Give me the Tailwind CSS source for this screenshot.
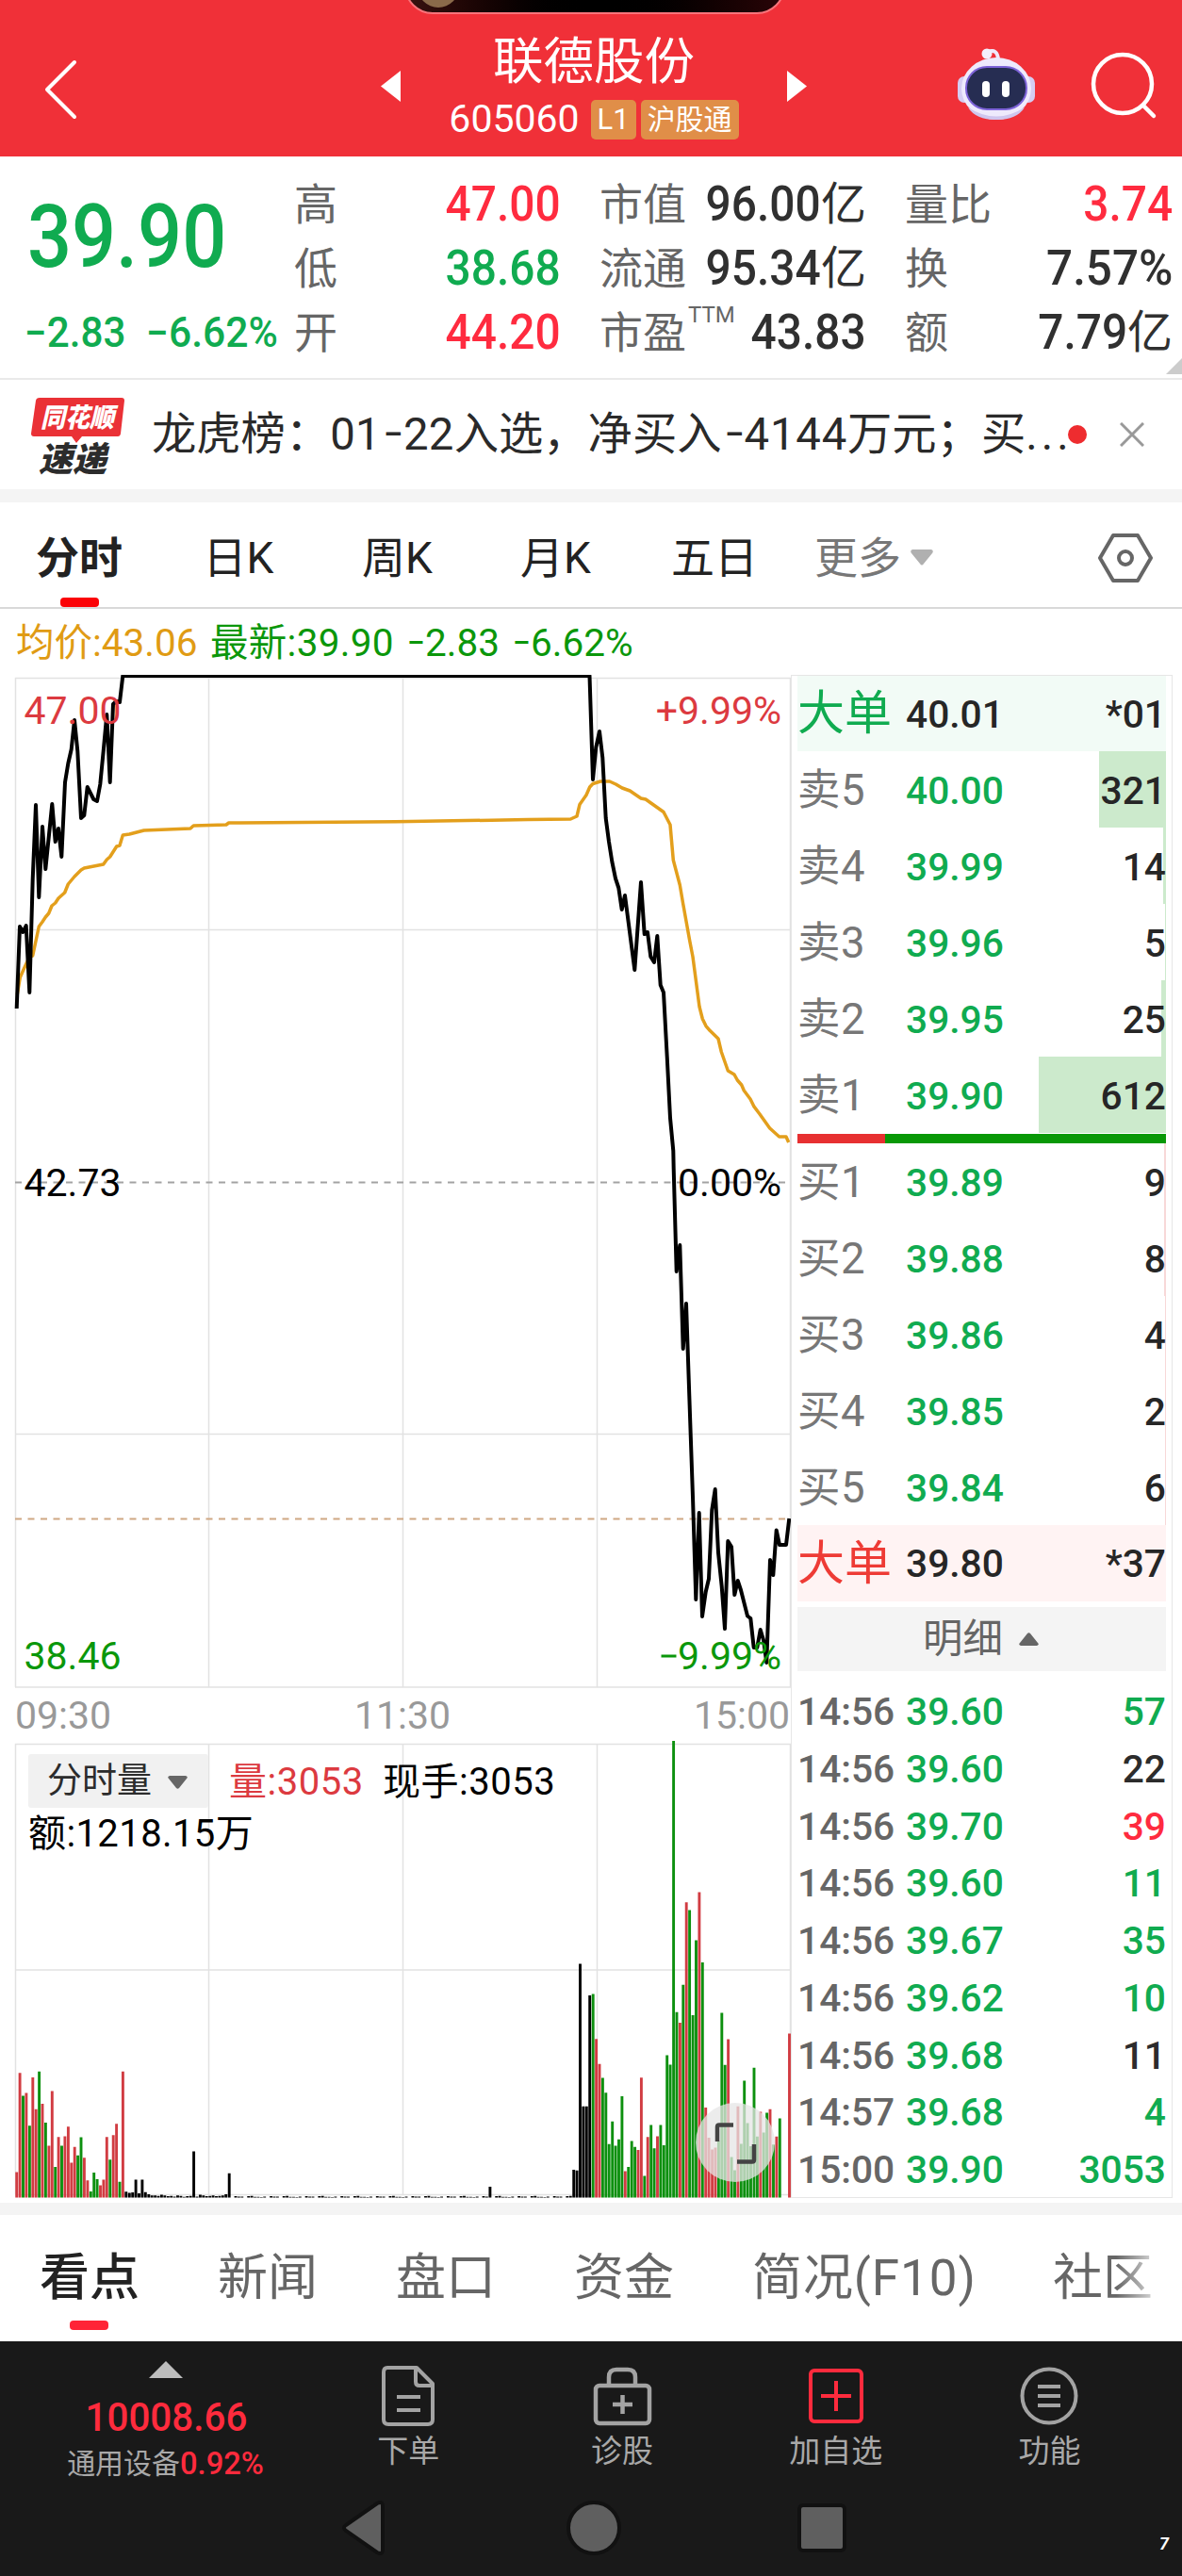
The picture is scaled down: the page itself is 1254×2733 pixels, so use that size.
<!DOCTYPE html>
<html lang="zh-CN">
  <head>
    <meta charset="UTF-8" />
    <meta name="viewport" content="width=device-width, initial-scale=1.0" />
    <title>联德股份 605060</title>
    <script src="https://cdn.jsdelivr.net/npm/@tailwindcss/browser@4"></script>
  </head>

  <body class="w-[1254px] bg-white font-[Roboto,'Noto_Sans_CJK_SC',sans-serif] text-[#222] leading-none whitespace-nowrap">
    <!-- header -->
    <header class="relative flex h-[166px] items-center overflow-hidden bg-[#f03038] text-white">
      <div class="absolute -top-12 left-[429px] h-[63px] w-[404px] overflow-hidden rounded-[30px] border-2 border-[#f8737a] bg-linear-to-r from-[#3a1210] via-black to-[#2a0508]">
        <div class="absolute bottom-[5px] left-3 size-[44px] rounded-full bg-[#8a6a4a]"></div>
      </div>
      <svg class="ml-[44px] mt-[24px] h-[64px] w-[40px]" viewBox="0 0 40 64" fill="none" stroke="#fff" stroke-width="4" stroke-linecap="round" stroke-linejoin="round"><path d="M35 3 6 32l29 29" /></svg>
      <svg class="ml-[320px] mt-[17px] h-[33px] w-[21px]" viewBox="0 0 21 33" fill="#fff"><path d="M21 0v33L0 16.500z" /></svg>
      <div class="mt-[23px] flex w-[410px] flex-col items-center">
        <h1 class="h-[64px] text-[53.500px] leading-[64px]">联德股份</h1>
        <div class="flex h-[58px] items-center">
          <span class="mr-[12px] text-[41px]">605060</span>
          <span class="mr-[5px] h-[42px] w-[48px] rounded-[5px] bg-[#e08e48] text-center text-[31px] leading-[42px]">L1</span>
          <span class="h-[42px] w-[104px] rounded-[5px] bg-[#e08e48] text-center text-[30px] leading-[41px]">沪股通</span>
        </div>
      </div>
      <svg class="mt-[17px] h-[33px] w-[21px]" viewBox="0 0 21 33" fill="#fff"><path d="M0 0v33l21-16.500z" /></svg>
      <svg class="ml-[159px] mt-[12px] h-[80px] w-[84px]" viewBox="0 0 84 80">
        <path d="M33 6q10-4 11 8" fill="none" stroke="#efe9fb" stroke-width="4" />
        <circle cx="32" cy="8" r="5.500" fill="#f4effc" />
        <rect x="1" y="32" width="14" height="28" rx="7" fill="#d5ccf2" />
        <rect x="69" y="32" width="14" height="28" rx="7" fill="#d5ccf2" />
        <ellipse cx="42" cy="45" rx="37" ry="33" fill="#eeeafc" />
        <path d="M12 65q30 19 60 0-8 13-30 13T12 65z" fill="#cfc6ee" />
        <rect x="10" y="22" width="64" height="45" rx="22" fill="#262d52" stroke="#7d63d8" stroke-width="2" />
        <rect x="27" y="37" width="8" height="17" rx="4" fill="#fff" />
        <rect x="48" y="37" width="8" height="17" rx="4" fill="#fff" />
      </svg>
      <svg class="ml-[58px] mt-[16px] h-[72px] w-[72px]" viewBox="0 0 72 72" fill="none" stroke="#fff" stroke-width="4.500" stroke-linecap="round"><circle cx="34" cy="34" r="31" /><path d="m56 57 11 11" /></svg>
    </header>

    <!-- quote -->
    <section class="relative flex h-[237px] border-b-2 border-[#e9e9e9] pt-[17px] text-[46px] text-[#666]">
      <div class="w-[312px] font-medium text-[#10ab50]">
        <div class="h-[136px] pl-[29px] text-[92px] leading-[138px]"><span class="inline-block origin-left scale-x-[.9]">39.90</span></div>
        <div class="flex h-[68px] items-center pl-[26px] pt-px text-[43.500px] leading-[68px]"><span class="w-[129px]"><span class="inline-block origin-left scale-x-[.97]">−2.83</span></span><span class="inline-block origin-left scale-x-[.98]">−6.62%</span></div>
      </div>
      <div class="w-[283px] leading-[68px]">
        <div class="flex justify-between"><span>高</span><b class="origin-right scale-x-[.92] text-[52px] font-medium text-[#ff2b3f]">47.00</b></div>
        <div class="flex justify-between"><span>低</span><b class="origin-right scale-x-[.92] text-[52px] font-medium text-[#10ab50]">38.68</b></div>
        <div class="flex justify-between"><span>开</span><b class="origin-right scale-x-[.92] text-[52px] font-medium text-[#ff2b3f]">44.20</b></div>
      </div>
      <div class="ml-[41px] w-[283px] leading-[68px]">
        <div class="flex justify-between"><span>市值</span><span class="flex text-[#303030]"><b class="origin-right scale-x-[.92] text-[52px] font-medium">96.00</b><i class="text-[48px] font-normal not-italic">亿</i></span></div>
        <div class="flex justify-between"><span>流通</span><span class="flex text-[#303030]"><b class="origin-right scale-x-[.92] text-[52px] font-medium">95.34</b><i class="text-[48px] font-normal not-italic">亿</i></span></div>
        <div class="relative flex justify-between"><span>市盈</span><sup class="absolute left-[94px] top-[3px] text-[24px] leading-[24px]">TTM</sup><b class="origin-right scale-x-[.92] text-[52px] font-medium text-[#303030]">43.83</b></div>
      </div>
      <div class="ml-[41px] w-[284px] leading-[68px]">
        <div class="flex justify-between"><span>量比</span><b class="origin-right scale-x-[.92] text-[52px] font-medium text-[#ff2b3f]">3.74</b></div>
        <div class="flex justify-between"><span>换</span><b class="origin-right scale-x-[.95] text-[52px] font-medium text-[#303030]">7.57%</b></div>
        <div class="flex justify-between"><span>额</span><span class="flex text-[#303030]"><b class="origin-right scale-x-[.92] text-[52px] font-medium">7.79</b><i class="text-[48px] font-normal not-italic">亿</i></span></div>
      </div>
      <svg class="absolute right-0 top-[214px] size-[17px]" viewBox="0 0 17 17"><path d="M17 0v17H0z" fill="#ccc" /></svg>
    </section>

    <!-- news line -->
    <section class="flex h-[116px] items-center">
      <div class="ml-[33px] flex w-[128px] flex-col">
        <svg class="h-[48px] w-[99px]" viewBox="0 0 99 48">
          <path d="M9 0h87q3 0 3 3l-4 35q-.5 3-3 3H54l-6 7-5-7H3q-3 0-3-3L5 3q.5-3 4-3z" fill="#ea3136" />
          <text x="49" y="31" text-anchor="middle" font-size="28" font-weight="900" font-style="italic" fill="#fff" textLength="78" lengthAdjust="spacingAndGlyphs" class="font-['Noto_Sans_CJK_SC',sans-serif]">同花顺</text>
        </svg>
        <span class="-mt-[3px] ml-[8px] text-[36px] font-black italic leading-[34px] text-[#2c2c2c] font-['Noto_Sans_CJK_SC',sans-serif]">速递</span>
      </div>
      <p class="w-[972px] pt-[2px] text-[47.300px] text-[#2a2a2a]">龙虎榜：<span class="tracking-[.3px]">01<i class="inline-block w-[24px] scale-x-[.8] not-italic">−</i>22</span>入选，净买入<span class="tracking-[.8px]"><i class="inline-block w-[24px] scale-x-[.8] not-italic">−</i>4144</span>万元；买<span class="tracking-[4px]">...</span></p>
      <span class="size-[20px] rounded-full bg-[#ee2c2f]"></span>
      <svg class="ml-[35px] size-[26px]" viewBox="0 0 26 26" stroke="#999" stroke-width="3"><path d="m1 1 24 24M25 1 1 25" /></svg>
    </section>
    <div class="h-[14px] bg-[#f4f4f4]"></div>

    <!-- chart tabs -->
    <nav class="flex h-[113px] border-b-2 border-[#d9d9d9] text-[46px] leading-[118px] text-[#222]">
      <span class="relative w-[168px] text-center font-bold">分时<i class="absolute bottom-0 left-[64px] h-[10px] w-[41px] rounded-[4px] bg-[#fb0307]"></i></span>
      <span class="w-[170px] text-center">日K</span>
      <span class="w-[167px] text-center">周K</span>
      <span class="w-[169px] text-center">月K</span>
      <span class="w-[168px] text-center">五日</span>
      <span class="ml-[22px] text-[#777]">更多</span>
      <svg class="ml-[10px] mt-[50px] h-[17px] w-[24px]" viewBox="0 0 24 17" fill="#b0b0b0"><path d="M2 0h20q3 1 1 4L14 15q-2 3-4 0L1 4Q-1 1 2 0z" /></svg>
      <svg class="ml-[175px] mt-[33px] h-[52px] w-[58px]" viewBox="0 0 58 52" fill="none" stroke="#666" stroke-width="4" stroke-linejoin="round"><path d="M16 2h26l14 24-14 24H16L2 26z" /><circle cx="29" cy="26" r="7" /></svg>
    </nav>

    <p class="flex h-[70px] items-center pl-[17px] pt-[2px] text-[40.500px] text-[#0b970b]"><span class="w-[206px] text-[#e09b14]">均价:43.06</span><span class="w-[207px] tracking-[.3px]">最新:39.90</span><span class="w-[112px]"><i class="inline-block w-[21px] scale-x-[.85] not-italic">−</i>2.83</span><span><i class="inline-block w-[21px] scale-x-[.85] not-italic">−</i>6.62%</span></p>

    <main class="flex h-[1621px]">
      <div class="w-[839px]">
        <!-- price chart -->
        <svg class="block h-[1080px] w-[839px]" viewBox="0 716 839 1080" fill="none">
          <path d="M16 719.500h823M16 986.500h823M16 1521.500h823M16 1790h823M16.500 719v1071M221.500 719v1071M427.500 719v1071M633.500 719v1071M838.500 719v1071" stroke="#e2e2e2" stroke-width="1.500" />
          <path d="M16 1254.500H838" stroke="#a3a3a3" stroke-width="2" stroke-dasharray="7 6.500" />
          <path d="M16 1611.500H838" stroke="#cfa883" stroke-width="2" stroke-dasharray="7 6.500" />
          <polyline stroke="#e39f1c" stroke-width="3.500" stroke-linejoin="round" points="18.300,1055 21.300,1037 25.300,1028 31.300,1015 34.700,1014 41.300,983 45,978 48.300,973 51.700,969 55,961 58.700,958 62,953 68.700,947 72.300,938 79,930 86,923 89.300,921 109.700,917 113.300,912 116.700,909 123.700,898 127,897 130.300,886 137.300,885 152.700,881 202,879 205.300,876 240,875 242.700,873 420,871.700 560,869.600 605.300,869 612,866 615,853.500 622,843.500 625.700,835 629,831.500 637,829 646.700,829 653.300,832 660,836 668.300,839 680,847 685,848 704,861.500 711,875 714.300,912.500 721.300,939 724.700,959 731.700,998 735,1015 742,1068 745.300,1081 749,1088.600 753.300,1093.600 762,1102 765.300,1116 772.300,1136 779,1140 782.300,1146 786.700,1151 789.300,1157 796,1166 799.700,1173.600 806,1182 816.700,1197 826.700,1206 834,1206 836.700,1212" />
          <polyline stroke="#000" stroke-width="4" stroke-linejoin="round" points="17.700,1070 21,983 24.300,989 27.700,982 31.300,1053 34.700,933 38,854 41.300,952 45,877 48.300,922 55.300,853 58.700,893 62,879 65.300,909 69,830 72.300,810 75.700,795 79,764 82.300,797 86,868 89.300,865 92.700,835 99.300,848 103,850 106.300,832 109.700,797 113.300,758 116.700,830 120,747 123.300,744 127,745 130.300,717 625.500,717 629,827 632.300,793 636,776 639.300,804 642.700,868 646,893 649.300,914 653,932 656.300,942 659.700,965 663,950 673.300,1029 680,936 683.700,991 687,989 690.300,1015 694,1021 697.300,993 700.700,1045 704,1053 707.700,1121 711,1186 714.300,1221 714.700,1240 717.700,1349 721.300,1321 724.700,1431 728,1383 731.300,1481 735,1588 738.300,1697 741.700,1605 745,1715 748.700,1689 752,1675 755.300,1602 758.700,1580 762,1647 765.700,1683 769,1728 772.300,1635 776,1641 779.300,1692 782.700,1677 786,1687 793,1714.500 796.300,1717 799.700,1748 803.300,1748 806.700,1729 810,1740 813.300,1764 817,1655 820.300,1671 823.700,1623.500 827,1639 834,1639 837.300,1611" />
          <g font-size="41">
            <g fill="#dc3a40"><text x="25.500" y="767.500">47.00</text><text x="829" y="767.500" text-anchor="end">+9.99%</text></g>
            <g fill="#000"><text x="25.500" y="1269">42.73</text><text x="829" y="1269" text-anchor="end">0.00%</text></g>
            <g fill="#0b970b"><text x="25.500" y="1771">38.46</text><text x="829" y="1771" text-anchor="end">9.99%</text><path d="M701.500 1757h16" stroke="#0b970b" stroke-width="3" /></g>
          </g>
        </svg>
        <div class="flex h-[48px] justify-between pl-[16px] pr-px text-[41px] leading-[49px] text-[#999]"><span>09:30</span><span>11:30</span><span>15:00</span></div>

        <!-- volume chart -->
        <div class="relative h-[490px]">
          <svg class="absolute inset-0 h-[490px] w-[839px]" viewBox="0 1844 839 490" fill="none">
            <path d="M16 1850.500h823M16 2090h823M16 2328.500h823M16.500 1850v478M221.500 1850v478M427.500 1850v478M633.500 1850v478M838.500 1850v478" stroke="#e2e2e2" stroke-width="1.500" />
            <path id="barsUp" stroke="#d13c42" stroke-width="2.900" />
            <path id="barsDown" stroke="#0d900f" stroke-width="2.900" />
            <path id="barsFlat" stroke="#000" stroke-width="2.900" />
          </svg>
          <div class="relative flex flex-col pl-[30px] pt-[17px] text-black">
            <div class="flex h-[57px] items-center">
              <span class="flex h-[57px] w-[191px] items-center rounded-[3px] bg-[#f1f1f1] pl-[20px] text-[37px] text-[#2c2c2c]">分时量<svg class="ml-[17px] mt-[2px] h-[14px] w-[21px]" viewBox="0 0 21 14" fill="#666"><path d="M2 0h17q3 1 1 3l-8 10q-1.500 1.500-3 0L1 3Q-1 1 2 0z" /></svg></span>
              <span class="ml-[22px] mt-[3px] w-[163px] text-[40px] tracking-[.5px] text-[#dc3a40]">量:3053</span>
              <span class="mt-[3px] text-[40px] tracking-[.5px]">现手:3053</span>
            </div>
            <div class="h-[52px] text-[40px] leading-[55px] tracking-[.4px]">额:1218.15万</div>
          </div>
          <div class="absolute left-[738px] top-[387px] size-[84px] rounded-full bg-[#e6e6e6]/75">
            <svg class="size-[84px]" viewBox="0 0 84 84" fill="none" stroke="#444" stroke-width="4.500"><path d="M23 41V25.500q0-2 2-2h15M44 62.500h16q2 0 2-2V44" /></svg>
          </div>
        </div>
      </div>

      <!-- order book -->
      <aside class="h-[1616px] w-[405px] border border-[#e6e6e6] px-[6px] text-[40.700px] font-medium text-[#262626]">
        <div class="flex h-[80px] items-center bg-[#f2fbf6]"><span class="w-[115px] text-[50px] font-normal text-[#10ab50]">大单</span><span class="pt-[2px]">40.01</span><span class="ml-auto pt-[2px]">*01</span></div>
        <div id="asks"></div>
        <div class="mt-px flex h-[10px] bg-[#089806]"><i class="w-[93px] bg-[#e73031]"></i></div>
        <div id="bids"></div>
        <div class="flex h-[81px] items-center bg-[#fff3f3]"><span class="w-[115px] text-[50px] font-normal text-[#ee3b35]">大单</span><span class="pt-[2px]">39.80</span><span class="ml-auto pt-[2px]">*37</span></div>
        <div class="mb-[12px] mt-[6px] flex h-[68px] items-center bg-[#f4f4f4] pl-[133px] text-[42.500px] font-normal text-[#666]">明细<svg class="ml-[17px] h-[14px] w-[21px]" viewBox="0 0 21 14" fill="#666"><path d="M9 1q1.500-1.500 3 0l8 10q2 2-1 3H2q-3-1-1-3z" /></svg></div>
        <div id="ticks"></div>
      </aside>
    </main>
    <div class="h-[13px] bg-[#f4f4f4]"></div>

    <!-- content tabs -->
    <nav class="relative flex h-[134px] gap-[83px] overflow-hidden pl-[42px] text-[53px] leading-[134px] text-[#666]">
      <span class="relative font-medium text-[#222]">看点<i class="absolute bottom-[12px] left-[32px] h-[10px] w-[41px] rounded-[4px] bg-[#ff2436]"></i></span>
      <span>新闻</span>
      <span>盘口</span>
      <span>资金</span>
      <span class="w-[236px] tracking-[.9px]">简况(F10)</span>
      <span>社区</span>
      <div class="absolute right-0 top-0 flex h-full w-[70px]"><i class="w-[38px] bg-linear-to-r from-white/0 to-white/70"></i><i class="flex-1 bg-white"></i></div>
    </nav>

    <!-- bottom bar -->
    <footer class="h-[249px] bg-[#191919] text-[33px] text-[#a8a8a8]">
      <div class="flex h-[150px]">
        <div class="flex w-[320px] flex-col items-center pl-[32px]">
          <svg class="mt-[21px] h-[18px] w-[36px] shrink-0" viewBox="0 0 36 18" fill="#bdbdbd"><path d="M18 0l18 18H0z" /></svg>
          <b class="mt-[15px] h-[52px] shrink-0 scale-x-[.95] text-[42.500px] font-medium leading-[54px] text-[#ff2b3d]">10008.66</b>
          <span class="flex text-[30px] leading-[48px]">通用设备<b class="origin-left scale-x-[.99] text-[33px] font-medium text-[#ff2b3d]">0.92%</b></span>
        </div>
        <div class="flex w-[226.700px] flex-col items-center">
          <svg class="mt-[25px] h-[66px] w-[58px]" viewBox="0 0 58 66" fill="none" stroke="#a3a3a3" stroke-width="4" stroke-linejoin="round"><path d="M7 3h31l17 17v38q0 5-5 5H8q-5 0-5-5V8q0-5 4-5zM37 4v14q0 4 4 4h13M17 34h25M17 48h25" /></svg>
          <span class="mt-[9px]">下单</span>
        </div>
        <div class="flex w-[226.700px] flex-col items-center">
          <svg class="mt-[25px] h-[66px] w-[64px]" viewBox="0 0 64 66" fill="none" stroke="#a3a3a3" stroke-width="4.500"><rect x="4" y="22" width="57" height="40" rx="4" /><path d="M18 22V13q0-8 8-8h12q8 0 8 8v9M32.500 32v20M22 42h21" /></svg>
          <span class="mt-[9px]">诊股</span>
        </div>
        <div class="flex w-[226.700px] flex-col items-center">
          <svg class="mt-[25px] h-[66px] w-[62px]" viewBox="0 0 62 66" fill="none" stroke="#ff2b3d" stroke-width="4"><rect x="4" y="6" width="54" height="54" rx="4" /><path d="M31 17v32M15 33h32" /></svg>
          <span class="mt-[9px]">加自选</span>
        </div>
        <div class="flex w-[226.700px] flex-col items-center">
          <svg class="mt-[25px] h-[66px] w-[64px]" viewBox="0 0 64 66" fill="none" stroke="#a3a3a3" stroke-width="4"><circle cx="32" cy="33" r="28.500" /><path d="M20 23h24M20 33h24M20 43h24" /></svg>
          <span class="mt-[9px]">功能</span>
        </div>
      </div>
      <!-- system keys -->
      <div class="relative flex h-[96px] items-center">
        <svg class="ml-[358px] h-[64px] w-[52px]" viewBox="0 0 52 64"><path d="M9 29 42 6q6-3 6 3v46q0 6-6 3L9 35q-4-3 0-6z" fill="#5f5f5f" stroke="#111" stroke-width="4" /></svg>
        <svg class="ml-[190px] size-[60px]" viewBox="0 0 60 60"><circle cx="30" cy="30" r="27" fill="#5f5f5f" stroke="#111" stroke-width="4" /></svg>
        <svg class="ml-[185px] size-[54px]" viewBox="0 0 54 54"><rect x="3" y="3" width="48" height="48" rx="4" fill="#5f5f5f" stroke="#111" stroke-width="4" /></svg>
        <span class="absolute left-[1230px] top-[56px] text-[18px] font-bold italic leading-[18px] text-white">7</span>
      </div>
    </footer>

    <script>
      const asks = [["卖5", "40.00", 321], ["卖4", "39.99", 14], ["卖3", "39.96", 5], ["卖2", "39.95", 25], ["卖1", "39.90", 612]];
      const bids = [["买1", "39.89", 9], ["买2", "39.88", 8], ["买3", "39.86", 4], ["买4", "39.85", 2], ["买5", "39.84", 6]];
      const ticks = [
        ["14:56", "39.60", 57, "g"], ["14:56", "39.60", 22, "k"], ["14:56", "39.70", 39, "r"],
        ["14:56", "39.60", 11, "g"], ["14:56", "39.67", 35, "g"], ["14:56", "39.62", 10, "g"],
        ["14:56", "39.68", 11, "k"], ["14:57", "39.68", 4, "g"], ["15:00", "39.90", 3053, "g"],
      ];
      const tickColor = { g: "text-[#10ab50]", k: "text-[#2c2c2c]", r: "text-[#ff2b3f]" };

      function renderBook(id, rows, barClass) {
        document.getElementById(id).innerHTML = rows.map(([label, price, vol]) => `
          <div class="relative flex h-[81px] items-center pt-[3px]">
            <i class="absolute right-0 top-0 h-full ${barClass}" style="width:${Math.max(1, vol * 0.2206).toFixed(1)}px"></i>
            <span class="w-[115px] text-[45.500px] font-normal tracking-[.5px] text-[#777]">${label}</span>
            <span class="text-[#10ab50]">${price}</span>
            <span class="relative ml-auto">${vol}</span>
          </div>`).join("");
      }
      renderBook("asks", asks, "bg-[#cceacc]");
      renderBook("bids", bids, "bg-[#f8d8d8]");

      document.getElementById("ticks").innerHTML = ticks.map(([time, price, vol, c]) => `
        <div class="flex h-[60.750px] items-center pt-[2px]">
          <span class="w-[115px] text-[#666]">${time}</span>
          <span class="text-[#10ab50]">${price}</span>
          <span class="ml-auto ${tickColor[c]}">${vol}</span>
        </div>`).join("");

      // minute volumes: r = up, g = down, k = flat
      const open = "r74 r364 g297 r305 g210 r351 r258 g368 r274 g219 r151 r311 g89 r177 g151 r179 r207 r102 r148 g123 g176 r116 r50 g18 g73 g54 r36 r52 r177 g111 r182 r215 g46 r368 k17 k14 k15 k52 k12 k52 k16 k10 k6 k6 k5 k8 k6 k4 k5 k3 k6 k5 k2 k4 k5 k135 k3 k8 k6 k4 k5 k6 k4 k5 k6 k10 k71";
      const close = "k81 k79 k682 k266 k266 k590 g594 r463 r390 g349 g306 g156 g222 g151 g170 g296 r77 g89 g165 g148 r139 r350 g63 r177 g212 g144 r179 g212 g153 g415 g388 g1333 g541 r510 g621 r862 g839 g532 g751 r891 g686 r263 r175 r140 r146 g166 g539 g387 r462 g118 g80 r266 g157 g341 g217 g150 g379 g178 r250 g190 g248 r258 g155 r178 g231";
      const paths = { r: "", g: "", k: "" };
      function bar(i, kind, v) {
        paths[kind] += `M${(17.7 + i * 3.416).toFixed(1)} 2331.5v${(-v * 0.3635).toFixed(1)}`;
      }
      open.split(" ").forEach((s, i) => bar(i, s[0], +s.slice(1)));
      for (let i = 67; i < 173; i++) {
        const v = [3, 2, 0, 4, 1, 5, 3, 0, 2, 4, 3][(i * 7) % 11];
        if (v) bar(i, "k", v);
      }
      bar(147, "k", 32);
      close.split(" ").forEach((s, i) => bar(173 + i, s[0], +s.slice(1)));
      bar(240, "r", 479);
      document.getElementById("barsUp").setAttribute("d", paths.r);
      document.getElementById("barsDown").setAttribute("d", paths.g);
      document.getElementById("barsFlat").setAttribute("d", paths.k);
    </script>
  </body>
</html>
